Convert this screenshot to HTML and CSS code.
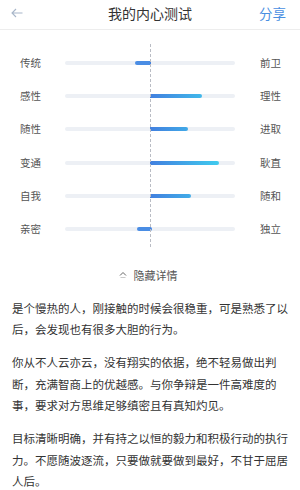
FILE: index.html
```html
<!DOCTYPE html>
<html lang="zh">
<head>
<meta charset="utf-8">
<link rel="stylesheet" href="styles.css">
</head>
<body>
<header class="topbar">
  <svg class="back" width="12" height="10" viewBox="0 0 12 10"><path d="M11.5 5H1M5 1L1 5l4 4" fill="none" stroke="#a8b6c9" stroke-width="1.1"/></svg>
  <h1 class="title">我的内心测试</h1>
  <span class="share">分享</span>
</header>

<section class="chart">
  <div class="row">
    <span class="lab">传统</span>
    <div class="track"><div class="half left"><i class="fill" style="width:15px"></i></div><div class="half right"><i class="fill" style="width:1px"></i></div></div>
    <span class="lab">前卫</span>
  </div>
  <div class="row">
    <span class="lab">感性</span>
    <div class="track"><div class="half left"></div><div class="half right"><i class="fill" style="width:52px"></i></div></div>
    <span class="lab">理性</span>
  </div>
  <div class="row">
    <span class="lab">随性</span>
    <div class="track"><div class="half left"></div><div class="half right"><i class="fill" style="width:38px"></i></div></div>
    <span class="lab">进取</span>
  </div>
  <div class="row">
    <span class="lab">变通</span>
    <div class="track"><div class="half left"></div><div class="half right"><i class="fill" style="width:69px"></i></div></div>
    <span class="lab">耿直</span>
  </div>
  <div class="row">
    <span class="lab">自我</span>
    <div class="track"><div class="half left"></div><div class="half right"><i class="fill" style="width:41px"></i></div></div>
    <span class="lab">随和</span>
  </div>
  <div class="row">
    <span class="lab">亲密</span>
    <div class="track"><div class="half left"><i class="fill" style="width:13px"></i></div><div class="half right"><i class="fill" style="width:2px"></i></div></div>
    <span class="lab">独立</span>
  </div>
</section>

<div class="toggle">
  <svg class="chev" width="8" height="7" viewBox="0 0 8 7"><path d="M1 4.5L4 1.5l3 3" fill="none" stroke="#666" stroke-width="1"/><path d="M1.5 6.5h5" stroke="#bbb" stroke-width="0.8"/></svg>
  <span>隐藏详情</span>
</div>

<article class="desc">
  <p>是个慢热的人，刚接触的时候会很稳重，可是熟悉了以后，会发现也有很多大胆的行为。</p>
  <p>你从不人云亦云，没有翔实的依据，绝不轻易做出判断，充满智商上的优越感。与你争辩是一件高难度的事，要求对方思维足够缜密且有真知灼见。</p>
  <p>目标清晰明确，并有持之以恒的毅力和积极行动的执行力。不愿随波逐流，只要做就要做到最好，不甘于屈居人后。</p>
</article>
</body>
</html>
```

FILE: styles.css
```css
* { box-sizing: border-box; }
html, body { margin: 0; padding: 0; background: #fff; }
body {
  width: 300px;
  font-family: "Noto Sans CJK SC", "Noto Sans", sans-serif;
  color: #333;
}
.topbar {
  height: 30px;
  display: flex;
  align-items: center;
  justify-content: space-between;
  padding: 0 14px 3px 11px;
  border-bottom: 1px solid #ededed;
  position: relative;
}
.back { display: block; }
.title {
  margin: 0;
  font-size: 14px;
  font-weight: normal;
  color: #333;
  line-height: 20px;
  position: absolute;
  left: 0; right: 0; top: 3px;
  text-align: center;
  pointer-events: none;
}
.share {
  font-size: 13.5px;
  color: #4a8fe2;
  line-height: 20px;
}
.chart {
  position: relative;
  padding-top: 16px;
}
.chart::after {
  content: "";
  position: absolute;
  left: 150px;
  top: 14px;
  bottom: -1px;
  border-left: 1px dashed #b9bcc4;
}
.row {
  height: 33.33px;
  display: grid;
  grid-template-columns: 45px 170px auto;
  column-gap: 0;
  align-items: center;
  padding-left: 20px;
}
.row .lab {
  font-size: 10.5px;
  color: #555;
  line-height: 14px;
}
.row .lab:last-child { padding-left: 25px; }
.track {
  height: 4px;
  display: flex;
  background: #edf0f5;
  border-radius: 2px;
}
.half { width: 85px; height: 4px; display: flex; }
.half.left { justify-content: flex-end; }
.fill { display: block; height: 4px; }
.left .fill { background: #4a8de4; border-radius: 2px 0 0 2px; }
.right .fill {
  background: linear-gradient(to right, #4280df, #3fdcf2);
  background-size: 85px 100%;
  border-radius: 0 2px 2px 0;
}
.toggle {
  margin-top: 18px;
  height: 22px;
  display: flex;
  align-items: center;
  justify-content: center;
  gap: 7px;
  font-size: 11px;
  color: #555;
  padding-right: 4px;
}
.chev { display: block; }
.desc {
  margin-top: 12px;
  padding: 0 12px;
}
.desc p {
  margin: 0 0 11.5px;
  font-size: 11.5px;
  line-height: 21.5px;
  color: #333;
}
```
